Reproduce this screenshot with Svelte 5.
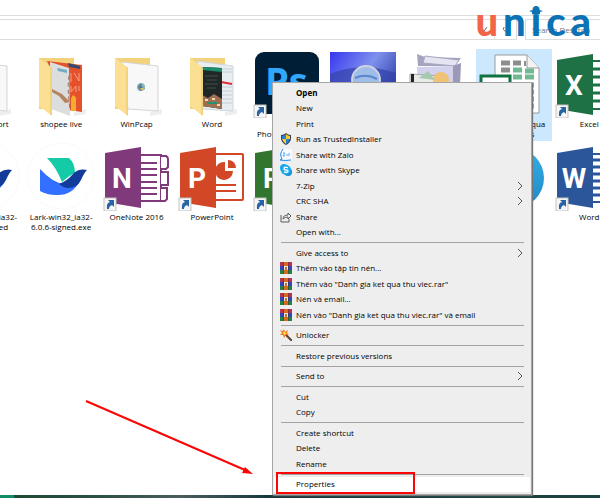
<script lang="ts">
  type IconName =
    | 'folder-plain' | 'folder-photo' | 'folder-app' | 'folder-docs'
    | 'photoshop' | 'viewer' | 'installer' | 'sheet' | 'office' | 'lark' | 'disc';

  interface FileItem {
    icon: IconName;
    lines: string[];
    letter?: string;
    color?: string;
    shortcut?: boolean;
    selected?: boolean;
  }

  interface MenuItem {
    label: string;
    icon?: string;
    submenu?: boolean;
    bold?: boolean;
    active?: boolean;
  }

  const files: FileItem[] = [
    { icon: 'folder-plain', lines: ['shop import'] },
    { icon: 'folder-photo', lines: ['shopee live'] },
    { icon: 'folder-app', lines: ['WinPcap'] },
    { icon: 'folder-docs', lines: ['Word'] },
    { icon: 'photoshop', lines: ['Adobe', 'Photoshop 2020'], shortcut: true },
    { icon: 'viewer', lines: ['Viewer'] },
    { icon: 'installer', lines: ['Setup'] },
    { icon: 'sheet', lines: ['Danh gia ket qua', 'thu viec.xls'], selected: true },
    { icon: 'office', letter: 'X', color: '#1e7145', lines: ['Excel'], shortcut: true },
    { icon: 'lark', lines: ['Lark-win32_ia32-', '6.0.6-signed'] },
    { icon: 'lark', lines: ['Lark-win32_ia32-', '6.0.6-signed.exe'] },
    { icon: 'office', letter: 'N', color: '#80397b', lines: ['OneNote 2016'], shortcut: true },
    { icon: 'office', letter: 'P', color: '#d24726', lines: ['PowerPoint'], shortcut: true },
    { icon: 'office', letter: 'P', color: '#31752f', lines: ['Project'], shortcut: true },
    { icon: 'disc', lines: ['Skype'] },
    { icon: 'disc', lines: ['Zalo'] },
    { icon: 'disc', lines: ['Telegram'] },
    { icon: 'office', letter: 'W', color: '#2b579a', lines: ['Word'], shortcut: true },
  ];

  const groups: MenuItem[][] = [
    [
      { label: 'Open', bold: true },
      { label: 'New' },
      { label: 'Print' },
      { label: 'Run as TrustedInstaller', icon: 'shield' },
      { label: 'Share with Zalo', icon: 'zalo' },
      { label: 'Share with Skype', icon: 'skype' },
      { label: '7-Zip', submenu: true },
      { label: 'CRC SHA', submenu: true },
      { label: 'Share', icon: 'share' },
      { label: 'Open with...' },
    ],
    [
      { label: 'Give access to', submenu: true },
      { label: 'Thêm vào tập tin nén...', icon: 'rar' },
      { label: 'Thêm vào "Danh gia ket qua thu viec.rar"', icon: 'rar' },
      { label: 'Nén và email...', icon: 'rar' },
      { label: 'Nén vào "Danh gia ket qua thu viec.rar" và email', icon: 'rar' },
    ],
    [{ label: 'Unlocker', icon: 'wand' }],
    [{ label: 'Restore previous versions' }],
    [{ label: 'Send to', submenu: true }],
    [{ label: 'Cut' }, { label: 'Copy' }],
    [{ label: 'Create shortcut' }, { label: 'Delete' }, { label: 'Rename' }],
    [{ label: 'Properties', active: true }],
  ];

  let search = $state('');
</script>

{#snippet fileIcon(file: FileItem)}
  <svg class="file-icon" viewBox="0 0 74 69" aria-hidden="true">
    {#if file.icon.startsWith('folder')}
      <path d="M15 9H50V60H15Z" fill="#f2d27c" />
      <path d="M50 63L62 60V65L50 67Z" fill="#eee" />
      {#if file.icon === 'folder-photo'}
        <path d="M23 12L58 16V63L44 61Z" fill="#e4512b" />
        <path d="M26 13L45 19L46 67L27 60Z" fill="#dcdedd" />
        <path d="M44 14L56 17V20L45 18Z" fill="#344c74" />
        <path d="M33 19L43 21V24L34 22Z" fill="#73a9c4" />
        <path d="M47 24V33M50 24L55 32V24M47 37V43L52 37V43M55 37V42" stroke="#f5a084" fill="none" />
        <path d="M28 40L38 45L46 53L41 54L35 47L28 43Z" fill="#b4835f" />
        <path d="M45 27Q43 40 46 60" stroke="#8b6c5c" fill="none" stroke-dasharray="4 3" />
        <path d="M47 62V50Q49 43 52 49V62Z" fill="#f1ae2e" />
      {:else if file.icon === 'folder-docs'}
        <path d="M22 12L58 17V62L28 60Z" fill="#e8edf2" stroke="#cfd5dc" />
        <path d="M46 20H57M46 23H57M47 38H57M47 42H57M47 46H57M47 50H57M47 54H57" stroke="#c4ced8" />
        <path d="M46 33L57 35" stroke="#e12b36" stroke-width="2" />
        <path d="M27 18L47 19V60L27 57Z" fill="#202727" />
        <path d="M27 18L47 19V23L27 21Z" fill="#1c8c70" />
        <path d="M30 27H43M32 31H42M30 35H43M32 39H41" stroke="#46514e" />
        <path d="M27 46L33 49L39 45L47 50V60L27 57Z" fill="#9f6f51" />
        <path d="M32 54H42" stroke="#269171" stroke-width="2" />
        <path d="M30 51h3M37 50h3M42 56h3" stroke="#efd7b3" stroke-width="2" />
      {:else}
        <path d="M22 13L58 17V62L28 60Z" fill="#f8f8f8" stroke="#d5d5d5" />
        {#if file.icon === 'folder-app'}
          <circle cx="41" cy="38" r="4" fill="#8db7ad" />
          <path d="M38 38L41 34L42 38L45 40L40 42Z" fill="#5479a1" />
          <path d="M40 39h4v2h-3z" fill="#d8bc5a" />
        {/if}
      {/if}
      <path d="M15 9L27 18Q28 19 28 21V67L15 57Z" fill="#fbdf93" />
      <path d="M27 18V66" stroke="#eac568" />
    {:else if file.icon === 'photoshop'}
      <rect x="5" y="3" width="64" height="62" rx="9" fill="#001e36" />
      <text x="15" y="46" class="ps">Ps</text>
    {:else if file.icon === 'viewer'}
      <defs>
        <linearGradient id="viewer-bg" x1="0" y1="0" x2="1" y2="0.6">
          <stop offset="0" stop-color="#3836ef" />
          <stop offset="0.55" stop-color="#7f91ec" />
          <stop offset="1" stop-color="#2c3ca8" />
        </linearGradient>
      </defs>
      <rect x="4" y="3" width="66" height="60" fill="url(#viewer-bg)" />
      <path d="M4 25Q34 12 70 24V63H4Z" fill="#3341a8" opacity="0.7" />
      <circle cx="40" cy="31" r="14" fill="#9fbde8" stroke="#ccd4e2" stroke-width="2" />
      <path d="M29 29Q40 24 51 30" stroke="#5b86c9" stroke-width="2" fill="none" />
    {:else if file.icon === 'installer'}
      <path d="M16 5L24 8L60 9L54 17L17 17Z" fill="#a5a3bd" />
      <path d="M24 7L58 11L54 17L22 14Z" fill="#e5e4f3" stroke="#a7a6c1" />
      <path d="M16 18L52 17V62H18Z" fill="#d3d2ed" />
      <path d="M52 17L60 14L58 60L52 62Z" fill="#9b99b6" />
      <path d="M9 25L42 27V45H9Z" fill="#e8ece6" stroke="#a4a9ab" />
      <circle cx="40" cy="31" r="8" fill="#efc276" />
      <path d="M10 25h3v12h-3z" fill="#242424" />
      <path d="M18 29L27 22L34 31Z" fill="#a6c8b0" />
    {:else if file.icon === 'sheet'}
      <path d="M18 6H50L62 19V64H18Z" fill="#fff" stroke="#9a9a9a" />
      <path d="M24 14h9M36 14h8M24 21h9" stroke="#8d8d8d" stroke-width="5" />
      <path d="M48 12v5" stroke="#8d8d8d" stroke-width="2" />
      <path d="M50 6V19H62" fill="#f3f3f3" stroke="#9a9a9a" />
      <path d="M36 21h9M48 22h9M36 28h9M48 28h9M48 36h9M48 43h9M48 50h9M48 57h9" stroke="#72b993" stroke-width="5" />
      <rect x="4" y="27" width="29" height="30" fill="#fff" stroke="#107141" stroke-width="3" />
    {:else if file.icon === 'lark'}
      <circle cx="37" cy="34" r="33" fill="#fff" stroke="#fafafa" />
      <path d="M23 16H45Q51 21 51 31Q46 33 38 40Q32 25 23 16Z" fill="#14cba8" />
      <path d="M16 27Q29 41 40 42L56 39Q48 54 32 53Q23 53 16 49Z" fill="#3370ff" />
      <path d="M35 42Q43 39 48 33Q54 26 63 28Q60 31 57 38Q53 46 44 46Q40 46 35 42Z" fill="#133c9a" />
    {:else if file.icon === 'disc'}
      <defs>
        <linearGradient id="disc-bg" x1="0" y1="0" x2="0" y2="1">
          <stop offset="0" stop-color="#37aee2" />
          <stop offset="1" stop-color="#1e88c7" />
        </linearGradient>
      </defs>
      <circle cx="37" cy="36" r="30" fill="url(#disc-bg)" />
    {:else}
      {#if file.letter === 'N'}
        <path d="M41 13H61V59H41" fill="#fff" stroke={file.color} stroke-width="2" />
        <path d="M61 14h5q2 1 2 3v8l-2 2h-5M61 30h7v13h-7M61 46h6v11l-2 2h-4" fill="#fff" stroke={file.color} stroke-width="2" />
        <path d="M41 21h16M41 27h16M41 33h16M41 40h16M41 46h16M41 52h16" stroke={file.color} stroke-width="2" />
      {:else if file.color === '#d24726'}
        <rect x="40" y="12" width="28" height="46" rx="1" fill="#fff" stroke={file.color} stroke-width="2" />
        <path d="M50 20A9 9 0 1 0 58 29H50Z" fill={file.color} />
        <path d="M53 18A8 8 0 0 1 61 26H53Z" fill={file.color} />
        <path d="M41 43h20M41 49h20" stroke={file.color} stroke-width="2" />
      {:else if file.letter === 'X'}
        <path d="M41 12H69V60H41" fill="#fff" stroke={file.color} stroke-width="2" />
        <path d="M41 20h28M41 28h28M41 36h28M41 44h28M41 52h28" stroke={file.color} stroke-width="3" />
      {:else}
        <path d="M41 12H69V60H41" fill="#fff" stroke={file.color} stroke-width="2" />
        <path d="M41 18h24M41 25h24M41 32h24M41 39h24M41 46h24M41 53h24" stroke={file.color} stroke-width="3" />
      {/if}
      <path d="M5 11L41 5V66L5 60Z" fill={file.color} />
      <text x="22" y="46" class="letter">{file.letter}</text>
    {/if}
    {#if file.shortcut}
      <rect x="4" y="56" width="12" height="13" fill="#f6f6f6" stroke="#c3c3c3" />
      <path d="M7 67Q6 61 10 60L8 58H14V65L12 63Q9 64 9 67Z" fill="#2763a5" />
    {/if}
  </svg>
{/snippet}

{#snippet menuIcon(name: string)}
  <svg viewBox="0 0 12 12" aria-hidden="true">
    {#if name === 'shield'}
      <path d="M6 0Q8 2 11 2V6Q10 10 6 12Q2 10 1 6V2Q4 2 6 0Z" fill="#3a4550" />
      <path d="M6 1V6H2V3Q4 3 6 1ZM6 6H10Q9 9 6 11Z" fill="#2381dc" />
      <path d="M6 1Q8 3 10 3V6H6ZM6 6V11Q3 9 2 6Z" fill="#fcc927" />
    {:else if name === 'zalo'}
      <path d="M2 0H10Q12 0 12 2V10Q12 12 10 12H2Q0 12 0 10V2Q0 0 2 0Z" fill="#f8fbff" />
      <path d="M3 0Q-1 5 2 10L0 11Q5 12 11 11" fill="none" stroke="#1684ee" />
      <path d="M3 4H5L3 7H5M7 5V7M9 4V7" fill="none" stroke="#5aa6f3" />
    {:else if name === 'skype'}
      <circle cx="4" cy="4" r="4" fill="#18a9ed" />
      <circle cx="8" cy="8" r="4" fill="#168bd8" />
      <circle cx="6" cy="6" r="5" fill="#18a9ed" />
      <path d="M8 4Q4 2 4 5Q4 6 6 6Q8 6 8 7Q8 9 4 8" fill="none" stroke="#fff" stroke-width="1.3" />
    {:else if name === 'share'}
      <path d="M1 4V11H9V8M3 8Q3 4 8 4V2L11 5L8 8V6Q5 6 3 8Z" fill="none" stroke="#5a5a5a" />
    {:else if name === 'rar'}
      <path d="M0 0h12v4H0z" fill="#b8324d" />
      <path d="M0 4h12v4H0z" fill="#3346b5" />
      <path d="M0 8h12v4H0z" fill="#24813e" />
      <path d="M3 0h1v12H3zM8 0h1v12H8z" fill="#3e2633" opacity="0.4" />
      <path d="M4 0h4v12H4z" fill="#d56a23" />
      <path d="M4 4h4v4H4z" fill="#f2e3cc" />
      <path d="M5 5h2v3H5z" fill="#b67848" />
    {:else}
      <path d="M5 5L12 12" stroke="#5b4035" stroke-width="2" />
      <path d="M4 0L5 3L8 1L7 4L9 6L6 6L4 9L3 6L0 6L2 4L0 1L3 2Z" fill="#f47b20" />
      <path d="M3 3L5 3L6 5L4 6Z" fill="#ffe35a" />
    {/if}
  </svg>
{/snippet}

<div class="window">
  <header class="toolbar">
    <div class="address">
      <input type="text" aria-label="Address" />
      <button class="drop" aria-label="Previous locations">
        <svg viewBox="0 0 8 8"><path d="M1 2L4 6L7 2" /></svg>
      </button>
      <button class="refresh" aria-label="Refresh">
        <svg viewBox="0 0 8 8"><path d="M6 1A3 3 0 1 1 2 2M6 1V4" /></svg>
      </button>
    </div>
    <input class="search" type="search" placeholder="Search Desktop" aria-label="Search Desktop" bind:value={search} />
    <div class="logo" aria-label="unica">
      <span class="u">u</span><span>n</span><span class="i">i<svg viewBox="0 0 14 6" aria-hidden="true"><path d="M0 2L7 0L14 2L11 3V5Q7 7 3 5V3Z" /></svg></span><span>c</span><span>a</span>
    </div>
  </header>

  <main>
    <div class="files">
      {#each files as file}
        <button class="file" class:selected={file.selected}>
          {@render fileIcon(file)}
          {#each file.lines as line}
            <span>{line}</span>
          {/each}
        </button>
      {/each}
    </div>
  </main>

  <div class="taskbar"></div>

  <div class="menu" role="menu">
    {#each groups as group, i}
      {#if i > 0}
        <hr />
      {/if}
      {#each group as item}
        <button role="menuitem" class:bold={item.bold} class:active={item.active}>
          <span class="menu-icon">
            {#if item.icon}
              {@render menuIcon(item.icon)}
            {/if}
          </span>
          <span class="label">{item.label}</span>
          {#if item.submenu}
            <svg class="more" viewBox="0 0 6 10" aria-hidden="true"><path d="M1 1L5 5L1 9" /></svg>
          {/if}
        </button>
      {/each}
    {/each}
  </div>

  <svg class="pointer" viewBox="0 0 170 76" aria-hidden="true">
    <path d="M1 1L160 70" stroke="#fb0505" stroke-width="2" />
    <path d="M168 74L157 73L160 67Z" fill="#fb0505" />
  </svg>
</div>

<style>
  :global(body) {
    background: #fff;
  }

  .window {
    position: relative;
    display: flex;
    flex-direction: column;
    min-height: 100vh;
    padding-bottom: 2px;
    box-sizing: border-box;
    overflow: hidden;
    font-family: 'Open Sans', 'Noto Sans', sans-serif;
    font-size: 8px;
    color: #000;
  }

  button,
  input {
    font: inherit;
    color: inherit;
    border: 0;
    padding: 0;
    margin: 0;
    background: none;
    outline: none;
    min-width: 0;
  }

  .toolbar {
    position: relative;
    display: flex;
    gap: 8px;
    margin-top: 15px;
    padding-top: 3px;
    border-top: 1px solid #dedede;
  }

  .address {
    flex: 1;
    display: flex;
    height: 21px;
    box-sizing: border-box;
    border: 1px solid #dcdcdc;
    border-left: 0;
  }

  .address input {
    flex: 1;
  }

  .address button {
    width: 21px;
  }

  .address .drop {
    border-right: 1px solid #dcdcdc;
  }

  .address svg {
    width: 8px;
    height: 8px;
    fill: none;
    stroke: #666;
  }

  .search {
    width: 75px;
    height: 21px;
    box-sizing: border-box;
    padding-left: 6px;
    border: 1px solid #dcdcdc;
    border-right: 0;
    appearance: none;
  }

  .search::placeholder {
    color: #777;
  }

  .logo {
    position: absolute;
    top: -15px;
    right: 9px;
    display: flex;
    gap: 5px;
    font-family: Lato, sans-serif;
    font-size: 40px;
    font-weight: 900;
    line-height: 40px;
    color: #0b72b5;
  }

  .logo .u {
    color: #f26548;
  }

  .logo .i {
    position: relative;
  }

  .logo svg {
    position: absolute;
    top: 8px;
    left: 50%;
    width: 14px;
    height: 6px;
    margin-left: -7px;
    fill: #0b72b5;
  }

  main {
    flex: 1;
    margin-top: 9px;
  }

  .files {
    display: grid;
    grid-template-columns: repeat(9, 1fr);
    grid-auto-rows: 93px;
    margin: 0 -27px 0 -52px;
  }

  .file {
    display: flex;
    flex-direction: column;
    align-items: center;
    margin-bottom: 1px;
    line-height: 10px;
    white-space: nowrap;
  }

  .file.selected {
    background: #cce8ff;
  }

  .file-icon {
    flex: none;
    width: 74px;
    height: 69px;
    margin-bottom: 1px;
  }

  .letter {
    font-family: Roboto, sans-serif;
    font-size: 28px;
    font-weight: 700;
    fill: #fff;
    text-anchor: middle;
  }

  .ps {
    font-size: 38px;
    font-weight: 700;
    fill: #31a8ff;
  }

  .taskbar {
    height: 3px;
    background: linear-gradient(90deg, #138a68 14px, #1f4a33 14px, #285044 15%, #4b5d5c 30%, #17383c 45%, #1c4440);
  }

  .menu {
    position: absolute;
    top: 82px;
    bottom: 5px;
    left: 272px;
    width: 260px;
    box-sizing: border-box;
    display: flex;
    flex-direction: column;
    padding: 2px 1px;
    background: #eee;
    border: 1px solid #a5a5a5;
    box-shadow: 1px 1px 1px #777;
  }

  .menu button {
    flex: 1;
    display: flex;
    align-items: center;
    padding: 0 7px 0 6px;
    line-height: 12px;
    text-align: left;
    white-space: nowrap;
  }

  .menu .bold {
    font-weight: 700;
  }

  .menu .active {
    position: relative;
    background: #fff;
  }

  .menu .active::after {
    content: '';
    position: absolute;
    top: -5px;
    bottom: -2px;
    left: 2px;
    width: 135px;
    border: 2px solid #fb0505;
  }

  .menu-icon {
    width: 12px;
    height: 12px;
    margin-right: 4px;
  }

  .menu-icon svg {
    display: block;
    width: 12px;
    height: 12px;
  }

  .label {
    flex: 1;
  }

  .more {
    width: 6px;
    height: 10px;
    fill: none;
    stroke: #555;
  }

  hr {
    width: calc(100% - 13px);
    height: 1px;
    margin: 2px auto;
    border: 0;
    background: #a3a3a3;
  }

  .pointer {
    position: absolute;
    left: 85px;
    bottom: 24px;
    width: 170px;
    height: 76px;
  }
</style>
